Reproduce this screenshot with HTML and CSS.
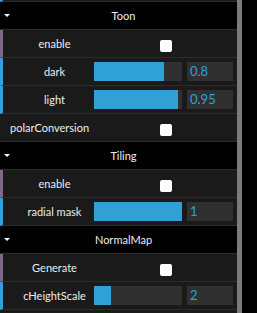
FILE: index.html
```html
<!DOCTYPE html>
<html lang="en">
<head>
    <meta charset="UTF-8">
    <title>Controls</title>
    <link rel="stylesheet" href="styles.css">
</head>
<body>

<div class="wrap">
    <div class="gui">
        <div class="row number partial"></div>

        <!-- Toon -->
        <div class="title"><span class="arrow"></span>Toon</div>
        <div class="row bool">
            <span class="name">enable</span>
            <div class="control"><span class="check"></span></div>
        </div>
        <div class="row number">
            <span class="name">dark</span>
            <div class="control">
                <div class="slider"><div class="fill" style="width: 80%;"></div></div>
                <div class="field">0.8</div>
            </div>
        </div>
        <div class="row number">
            <span class="name">light</span>
            <div class="control">
                <div class="slider"><div class="fill" style="width: 95%;"></div></div>
                <div class="field">0.95</div>
            </div>
        </div>
        <div class="row plain">
            <span class="name">polarConversion</span>
            <div class="control"><span class="check"></span></div>
        </div>

        <!-- Tiling -->
        <div class="title"><span class="arrow"></span>Tiling</div>
        <div class="row bool">
            <span class="name">enable</span>
            <div class="control"><span class="check"></span></div>
        </div>
        <div class="row number">
            <span class="name">radial mask</span>
            <div class="control">
                <div class="slider"><div class="fill" style="width: 100%;"></div></div>
                <div class="field">1</div>
            </div>
        </div>

        <!-- NormalMap -->
        <div class="title"><span class="arrow"></span>NormalMap</div>
        <div class="row bool">
            <span class="name">Generate</span>
            <div class="control"><span class="check"></span></div>
        </div>
        <div class="row number">
            <span class="name">cHeightScale</span>
            <div class="control">
                <div class="slider"><div class="fill" style="width: 19%;"></div></div>
                <div class="field">2</div>
            </div>
        </div>
    </div>
    <div class="scrollbar"></div>
</div>

</body>
</html>
```

FILE: styles.css
```css
body { margin: 0; background: #000; font-family: Lato, "Open Sans", sans-serif; font-size: 11px; color: #eee; overflow: hidden; }
.wrap { display: flex; height: 313px; overflow: hidden; }
.gui { width: 237px; background: #1a1a1a; }
.scrollbar { width: 5px; background: #7b7b7b; }

.row { display: flex; height: 27px; border-bottom: 1px solid #2c2c2c; border-left: 3px solid transparent; }
.row.partial { height: 1px; }
.row.bool { border-left-color: #806787; }
.row.number { border-left-color: #2fa1d6; }
.row.plain { border-left: none; }

.name { width: 79px; padding-left: 12px; text-align: center; line-height: 27px; white-space: nowrap; }
.row.plain .name { width: 84px; padding-left: 10px; text-align: left; }

.control { display: flex; gap: 5px; padding-top: 4px; }
.slider { width: 88px; height: 19px; background: #303030; }
.fill { height: 100%; background: #2fa1d6; }
.field { width: 43px; height: 19px; padding-left: 3px; background: #303030; color: #2fa1d6; font-size: 13px; line-height: 19px; }

.check { display: block; width: 12px; height: 12px; margin: 6px 0 0 66px; background: #fff; border-radius: 2px; }

.title { position: relative; height: 27px; padding-left: 10px; background: #000; border-bottom: 1px solid #2c2c2c; text-align: center; line-height: 27px; }
.arrow { position: absolute; left: 4px; top: 12px; width: 0; height: 0; border-left: 3px solid transparent; border-right: 3px solid transparent; border-top: 3px solid #fff; }
```
